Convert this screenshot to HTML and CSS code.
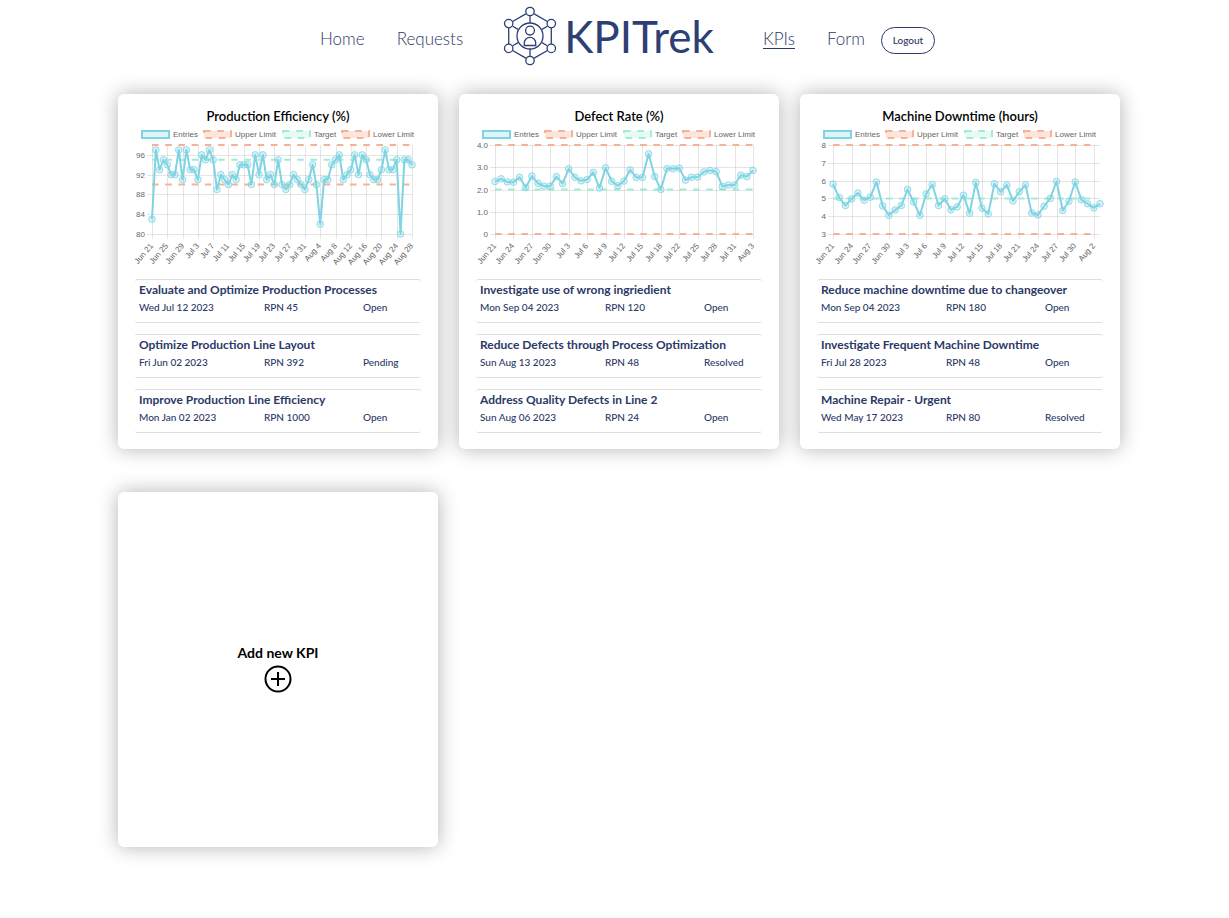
FILE: index.html
```html
<!DOCTYPE html>
<html lang="en">
<head>
<meta charset="utf-8">
<meta name="viewport" content="width=device-width, initial-scale=1">
<title>KPITrek - KPIs</title>
<link rel="stylesheet" href="styles.css">
</head>
<body>
<header class="header">
  <nav class="nav">
    <a class="nav-link" href="#home">Home</a>
    <a class="nav-link" href="#requests">Requests</a>
    <a class="logo" href="#home">
      <svg class="logo-mark" width="54" height="60" viewBox="0 0 54 60" fill="none" stroke="currentColor" stroke-width="1.3" aria-hidden="true">
        <path d="M22.800 7.900 9.600 15.500M31.200 7.900 44.400 15.500M22.800 52.100 9.600 44.500M31.200 52.100 44.400 44.500M5.700 22v16M48.300 22v16M27 10v7M27 43v7M9.700 20.300l5.300 3.100M44.300 20.300l-5.300 3.100M9.700 39.700l5.300-3.100M44.300 39.700l-5.300-3.100"/>
        <circle cx="27" cy="5.500" r="4.200"/><circle cx="27" cy="54.500" r="4.200"/>
        <circle cx="5.700" cy="17.600" r="4.200"/><circle cx="48.300" cy="17.600" r="4.200"/>
        <circle cx="5.700" cy="42.400" r="4.200"/><circle cx="48.300" cy="42.400" r="4.200"/>
        <circle cx="27" cy="30" r="13"/><circle cx="27" cy="24.600" r="4.400"/>
        <path d="M21.300 39.500v-2.500a5.700 5.700 0 0 1 11.400 0v2.500z"/>
      </svg>
      <span class="logo-text">KPITrek</span>
    </a>
    <a class="nav-link nav-link-active" href="#kpis" aria-current="page">KPIs</a>
    <a class="nav-link" href="#form">Form</a>
    <button class="logout" type="button">Logout</button>
  </nav>
</header>

<main class="cards">
  <section class="card">
    <h2 class="card-title">Production Efficiency (%)</h2>
    <svg class="chart" data-chart="efficiency" viewBox="0 0 286 153" role="img" aria-label="Production Efficiency chart"></svg>
    <ul class="actions">
      <li class="action"><h3 class="action-title">Evaluate and Optimize Production Processes</h3><div class="action-info"><span>Wed Jul 12 2023</span><span>RPN 45</span><span>Open</span></div></li>
      <li class="action"><h3 class="action-title">Optimize Production Line Layout</h3><div class="action-info"><span>Fri Jun 02 2023</span><span>RPN 392</span><span>Pending</span></div></li>
      <li class="action"><h3 class="action-title">Improve Production Line Efficiency</h3><div class="action-info"><span>Mon Jan 02 2023</span><span>RPN 1000</span><span>Open</span></div></li>
    </ul>
  </section>

  <section class="card">
    <h2 class="card-title">Defect Rate (%)</h2>
    <svg class="chart" data-chart="defects" viewBox="0 0 286 153" role="img" aria-label="Defect Rate chart"></svg>
    <ul class="actions">
      <li class="action"><h3 class="action-title">Investigate use of wrong ingriedient</h3><div class="action-info"><span>Mon Sep 04 2023</span><span>RPN 120</span><span>Open</span></div></li>
      <li class="action"><h3 class="action-title">Reduce Defects through Process Optimization</h3><div class="action-info"><span>Sun Aug 13 2023</span><span>RPN 48</span><span>Resolved</span></div></li>
      <li class="action"><h3 class="action-title">Address Quality Defects in Line 2</h3><div class="action-info"><span>Sun Aug 06 2023</span><span>RPN 24</span><span>Open</span></div></li>
    </ul>
  </section>

  <section class="card">
    <h2 class="card-title">Machine Downtime (hours)</h2>
    <svg class="chart" data-chart="downtime" viewBox="0 0 286 153" role="img" aria-label="Machine Downtime chart"></svg>
    <ul class="actions">
      <li class="action"><h3 class="action-title">Reduce machine downtime due to changeover</h3><div class="action-info"><span>Mon Sep 04 2023</span><span>RPN 180</span><span>Open</span></div></li>
      <li class="action"><h3 class="action-title">Investigate Frequent Machine Downtime</h3><div class="action-info"><span>Fri Jul 28 2023</span><span>RPN 48</span><span>Open</span></div></li>
      <li class="action"><h3 class="action-title">Machine Repair - Urgent</h3><div class="action-info"><span>Wed May 17 2023</span><span>RPN 80</span><span>Resolved</span></div></li>
    </ul>
  </section>

  <button class="card card-add" type="button">
    <span>Add new KPI</span>
    <svg width="28" height="28" viewBox="0 0 28 28" fill="none" stroke="currentColor" stroke-width="2" aria-hidden="true">
      <circle cx="14" cy="14" r="12.500"/><path d="M14 7v14M7 14h14"/>
    </svg>
  </button>
</main>
<script src="charts.js"></script>
</body>
</html>
```

FILE: styles.css
```css
* { box-sizing: border-box; }

body {
  margin: 0;
  padding-left: 9px;
  background: #fff;
  color: #2b3966;
  font-family: Lato, "Open Sans", sans-serif;
}

.header { height: 94px; padding-top: 8px; }

.nav {
  display: flex;
  justify-content: center;
  align-items: center;
  height: 64px;
  padding-left: 17px;
}

.nav-link {
  margin: 0 32px 2px 0;
  color: inherit;
  font-size: 17px;
  font-weight: 300;
  line-height: 18px;
  text-decoration: none;
  border-bottom: 1px solid transparent;
}

.nav-link-active { border-bottom-color: currentColor; }

.logo {
  display: flex;
  align-items: center;
  gap: 7px;
  height: 60px;
  margin: 0 49px 8px 8px;
  color: #2e3f73;
  text-decoration: none;
}

.logo-text { font-size: 44px; font-weight: 400; line-height: 60px; }

.logout {
  width: 54px;
  height: 27px;
  margin-left: -16px;
  padding: 0;
  border: 1px solid #2b3966;
  border-radius: 14px;
  background: #fff;
  color: #2b3966;
  font: 500 10px/16px Lato, sans-serif;
}

.cards {
  display: grid;
  grid-template-columns: repeat(auto-fit, 320px);
  justify-content: center;
  gap: 43px 21px;
  max-width: 1220px;
  margin: 0 auto;
  padding-bottom: 43px;
}

.card {
  display: flex;
  flex-direction: column;
  min-height: 355px;
  padding: 12px 17px 15px;
  border: 0;
  border-radius: 6px;
  background: #fff;
  box-shadow: 0 0 20px rgba(0, 0, 0, 0.3);
}

.card-title {
  margin: 0;
  color: #000;
  font-size: 13px;
  font-weight: 600;
  line-height: 20px;
  text-align: center;
}

.chart {
  display: block;
  width: 100%;
  overflow: visible;
  font-family: "Liberation Sans", Arial, sans-serif;
  font-size: 8px;
  fill: #666;
}

.grid-line { stroke: rgba(0, 0, 0, 0.1); }
.line { fill: none; stroke-width: 2; }
.line-limit { stroke: #f6b295; stroke-dasharray: 6.6 6.6; }
.line-target { stroke: #a0ecd6; stroke-dasharray: 6.6 6.6; }
.line-entries { stroke: #7fd4e3; stroke-linejoin: round; }
.point { fill: rgba(127, 212, 227, 0.3); stroke: rgba(127, 212, 227, 0.8); stroke-width: 1; }
.key { stroke-width: 2; }
.key-entries { fill: #dff4f8; stroke: #7fd4e3; }
.key-limit { fill: #fde5dc; stroke: #f6b295; stroke-dasharray: 6.6 6.6; }
.key-target { fill: #e7faf5; stroke: #a0ecd6; stroke-dasharray: 6.6 6.6; }

.actions {
  display: flex;
  flex-direction: column;
  gap: 11px;
  margin: 0;
  padding: 0;
  list-style: none;
}

.action {
  padding: 1px 4px 6px;
  border: solid #ddd;
  border-width: 1px 0;
  border-radius: 3px;
}

.action-title {
  margin: 0;
  font-size: 12px;
  font-weight: 700;
  line-height: 18px;
  white-space: nowrap;
}

.action-info {
  display: grid;
  grid-template-columns: 125px 99px 1fr;
  font-size: 10px;
  font-weight: 500;
  line-height: 17px;
}

.card-add {
  align-items: center;
  justify-content: center;
  gap: 2px;
  color: #000;
  font: 700 14px/20px Lato, sans-serif;
}
```

FILE: charts.js
```js
const charts = {
  efficiency: {
    left: 17, right: 277, min: 80, max: 98, ticks: [80, 84, 88, 92, 96], decimals: 0,
    upper: 98, target: 95, lower: 90, every: 4,
    labels: ["Jun 21", "Jun 25", "Jun 29", "Jul 3", "Jul 7", "Jul 11", "Jul 15", "Jul 19", "Jul 23", "Jul 27", "Jul 31", "Aug 4", "Aug 8", "Aug 12", "Aug 16", "Aug 20", "Aug 24", "Aug 28"],
    values: [83, 97, 93, 95, 94, 92, 92, 97, 91, 97, 93, 93, 91, 96, 95, 97, 95, 89, 92, 91, 90, 92, 91, 94, 94, 94, 90, 96, 92, 96, 91, 92, 90, 95, 90, 89, 90, 92, 91, 90, 89, 91, 94, 90, 82, 91, 91, 94, 95, 96, 91, 92, 93, 96, 92, 96, 95, 92, 91, 91, 93, 97, 93, 93, 95, 80, 95, 95, 94]
  },
  defects: {
    left: 19, right: 277, min: 0, max: 4, ticks: [0, 1, 2, 3, 4], decimals: 1,
    upper: 4, target: 2, lower: 0, every: 3,
    labels: ["Jun 21", "Jun 24", "Jun 27", "Jun 30", "Jul 3", "Jul 6", "Jul 9", "Jul 12", "Jul 15", "Jul 18", "Jul 22", "Jul 25", "Jul 28", "Jul 31", "Aug 3"],
    values: [2.36, 2.48, 2.34, 2.33, 2.55, 2.09, 2.6, 2.28, 2.15, 2.15, 2.58, 2.26, 2.93, 2.55, 2.39, 2.45, 2.77, 2.07, 2.97, 2.37, 2.17, 2.38, 2.88, 2.54, 2.54, 3.6, 2.58, 2, 2.94, 2.93, 2.96, 2.42, 2.55, 2.56, 2.79, 2.86, 2.8, 2.14, 2.2, 2.2, 2.64, 2.58, 2.86]
  },
  downtime: {
    left: 16, right: 283, min: 3, max: 8, ticks: [3, 4, 5, 6, 7, 8], decimals: 0,
    upper: 8, target: 5, lower: 3, every: 3, targetCount: 43,
    labels: ["Jun 21", "Jun 24", "Jun 27", "Jun 30", "Jul 3", "Jul 6", "Jul 9", "Jul 12", "Jul 15", "Jul 18", "Jul 21", "Jul 24", "Jul 27", "Jul 30", "Aug 2"],
    values: [5.8, 5.05, 4.6, 4.97, 5.3, 4.9, 5.07, 5.92, 4.58, 4.05, 4.35, 4.6, 5.5, 4.8, 4.05, 5.25, 5.78, 4.6, 4.98, 4.36, 4.52, 5.18, 4.17, 5.89, 4.45, 4.13, 5.82, 5.37, 5.75, 4.86, 5.37, 5.76, 4.18, 4.07, 4.56, 5, 5.95, 4.32, 4.84, 5.92, 4.93, 4.7, 4.47, 4.7]
  }
};

const TOP = 19;
const BOTTOM = 108;
const legend = [
  [7, "entries", "Entries"],
  [69, "limit", "Upper Limit"],
  [148, "target", "Target"],
  [207, "limit", "Lower Limit"]
];

function add(parent, name, attributes, text) {
  const node = document.createElementNS("http://www.w3.org/2000/svg", name);
  for (const key in attributes) node.setAttribute(key, attributes[key]);
  if (text !== undefined) node.textContent = text;
  parent.appendChild(node);
}

function draw(svg, c) {
  const step = (c.right - c.left) / (c.values.length - 1);
  const px = i => c.left + i * step;
  const py = v => BOTTOM - (v - c.min) / (c.max - c.min) * (BOTTOM - TOP);

  for (const [x, kind, label] of legend) {
    add(svg, "rect", { x, y: 5, width: 27, height: 7, class: "key key-" + kind });
    add(svg, "text", { x: x + 31, y: 11 }, label);
  }
  for (const t of c.ticks) {
    const y = Math.round(py(t)) + 0.5;
    add(svg, "path", { d: `M${c.left - 5} ${y}H${c.right}`, class: "grid-line" });
    add(svg, "text", { x: c.left - 7, y: y + 2, "text-anchor": "end" }, t === 0 ? "0" : t.toFixed(c.decimals));
  }
  c.labels.forEach((label, n) => {
    const x = Math.round(px(n * c.every)) + 0.5;
    add(svg, "path", { d: `M${x} ${TOP}V${BOTTOM + 5}`, class: "grid-line" });
    add(svg, "text", { transform: `translate(${x + 1} ${BOTTOM + 12}) rotate(-50)`, "text-anchor": "end" }, label);
  });
  const lineEnd = px((c.targetCount || c.values.length) - 1);
  for (const [v, kind] of [[c.upper, "limit"], [c.lower, "limit"], [c.target, "target"]]) {
    add(svg, "path", { d: `M${c.left} ${py(v)}H${lineEnd}`, class: "line line-" + kind });
  }
  add(svg, "polyline", { points: c.values.map((v, i) => px(i) + "," + py(v)).join(" "), class: "line line-entries" });
  c.values.forEach((v, i) => add(svg, "circle", { cx: px(i), cy: py(v), r: 3.3, class: "point" }));
}

document.querySelectorAll("[data-chart]").forEach(svg => draw(svg, charts[svg.dataset.chart]));
```
